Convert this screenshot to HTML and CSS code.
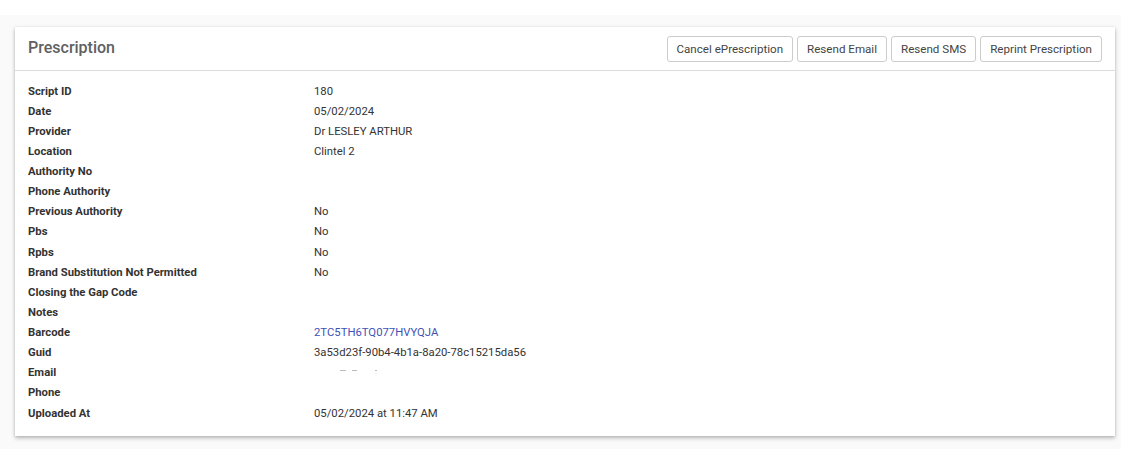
FILE: index.html
```html
<!DOCTYPE html>
<html lang="en">
<head>
<meta charset="utf-8">
<title>Prescription</title>
<link rel="stylesheet" href="styles.css">
</head>
<body>
<div class="page">
  <section class="card">
    <header class="card-header">
      <h2 class="card-title">Prescription</h2>
      <div class="actions">
        <button class="btn">Cancel ePrescription</button>
        <button class="btn">Resend Email</button>
        <button class="btn">Resend SMS</button>
        <button class="btn">Reprint Prescription</button>
      </div>
    </header>
    <div class="card-body">
      <dl class="details">
        <dt>Script ID</dt><dd>180</dd>
        <dt>Date</dt><dd>05/02/2024</dd>
        <dt>Provider</dt><dd>Dr LESLEY ARTHUR</dd>
        <dt>Location</dt><dd>Clintel 2</dd>
        <dt>Authority No</dt><dd></dd>
        <dt>Phone Authority</dt><dd></dd>
        <dt>Previous Authority</dt><dd>No</dd>
        <dt>Pbs</dt><dd>No</dd>
        <dt>Rpbs</dt><dd>No</dd>
        <dt>Brand Substitution Not Permitted</dt><dd>No</dd>
        <dt>Closing the Gap Code</dt><dd></dd>
        <dt>Notes</dt><dd></dd>
        <dt>Barcode</dt><dd><a class="link" href="#">2TC5TH6TQ077HVYQJA</a></dd>
        <dt>Guid</dt><dd>3a53d23f-90b4-4b1a-8a20-78c15215da56</dd>
        <dt>Email</dt><dd><span class="redacted"><i class="m m1"></i><i class="m m2"></i><i class="m m3"></i></span></dd>
        <dt>Phone</dt><dd></dd>
        <dt>Uploaded At</dt><dd>05/02/2024 at 11:47 AM</dd>
      </dl>
    </div>
  </section>
</div>
</body>
</html>
```

FILE: styles.css
```css
* { box-sizing: border-box; }

html, body {
  margin: 0;
  background: #ffffff;
  font-family: Roboto, "Liberation Sans", Arial, sans-serif;
  color: #333333;
}

.page {
  margin-top: 15px;
  width: 1121px;
  background: #fafafa;
  padding: 12px 6px 13px 15px;
}

.card {
  width: 1100px;
  background: #ffffff;
  box-shadow: 0 2px 4px rgba(0, 0, 0, 0.28), 0 0 2px rgba(0, 0, 0, 0.08);
}

.card-header {
  height: 44px;
  display: flex;
  align-items: center;
  justify-content: space-between;
  padding: 0 13px 0 13px;
  border-bottom: 1px solid #dddddd;
}

.card-title {
  margin: 0 0 3px 0;
  font-size: 16px;
  font-weight: 500;
  color: #606060;
  letter-spacing: 0;
}

.actions {
  display: flex;
  gap: 4px;
}

.btn {
  height: 26px;
  padding: 0 9px;
  background: #ffffff;
  border: 1px solid #cccccc;
  border-radius: 3px;
  font-family: Roboto, "Liberation Sans", Arial, sans-serif;
  font-size: 11.6px;
  color: #444444;
  cursor: pointer;
}

.card-body {
  padding: 10px 13px 13px 13px;
}

.details {
  margin: 0;
  display: grid;
  grid-template-columns: 286px 1fr;
  grid-auto-rows: 20.125px;
  align-items: center;
  font-size: 11.3px;
}

.details dt {
  font-weight: 700;
  color: #333333;
}

.details dd {
  margin: 0;
  color: #333333;
}

.link {
  color: #3f51b5;
  text-decoration: none;
}

.redacted {
  position: relative;
  display: inline-block;
  width: 70px;
  height: 10px;
}

.m {
  position: absolute;
  top: 4px;
  height: 1px;
  background: #bbbbbb;
}
.m1 { left: 26px; width: 6px; }
.m2 { left: 38px; width: 5px; }
.m3 { left: 61px; width: 2px; }
```
